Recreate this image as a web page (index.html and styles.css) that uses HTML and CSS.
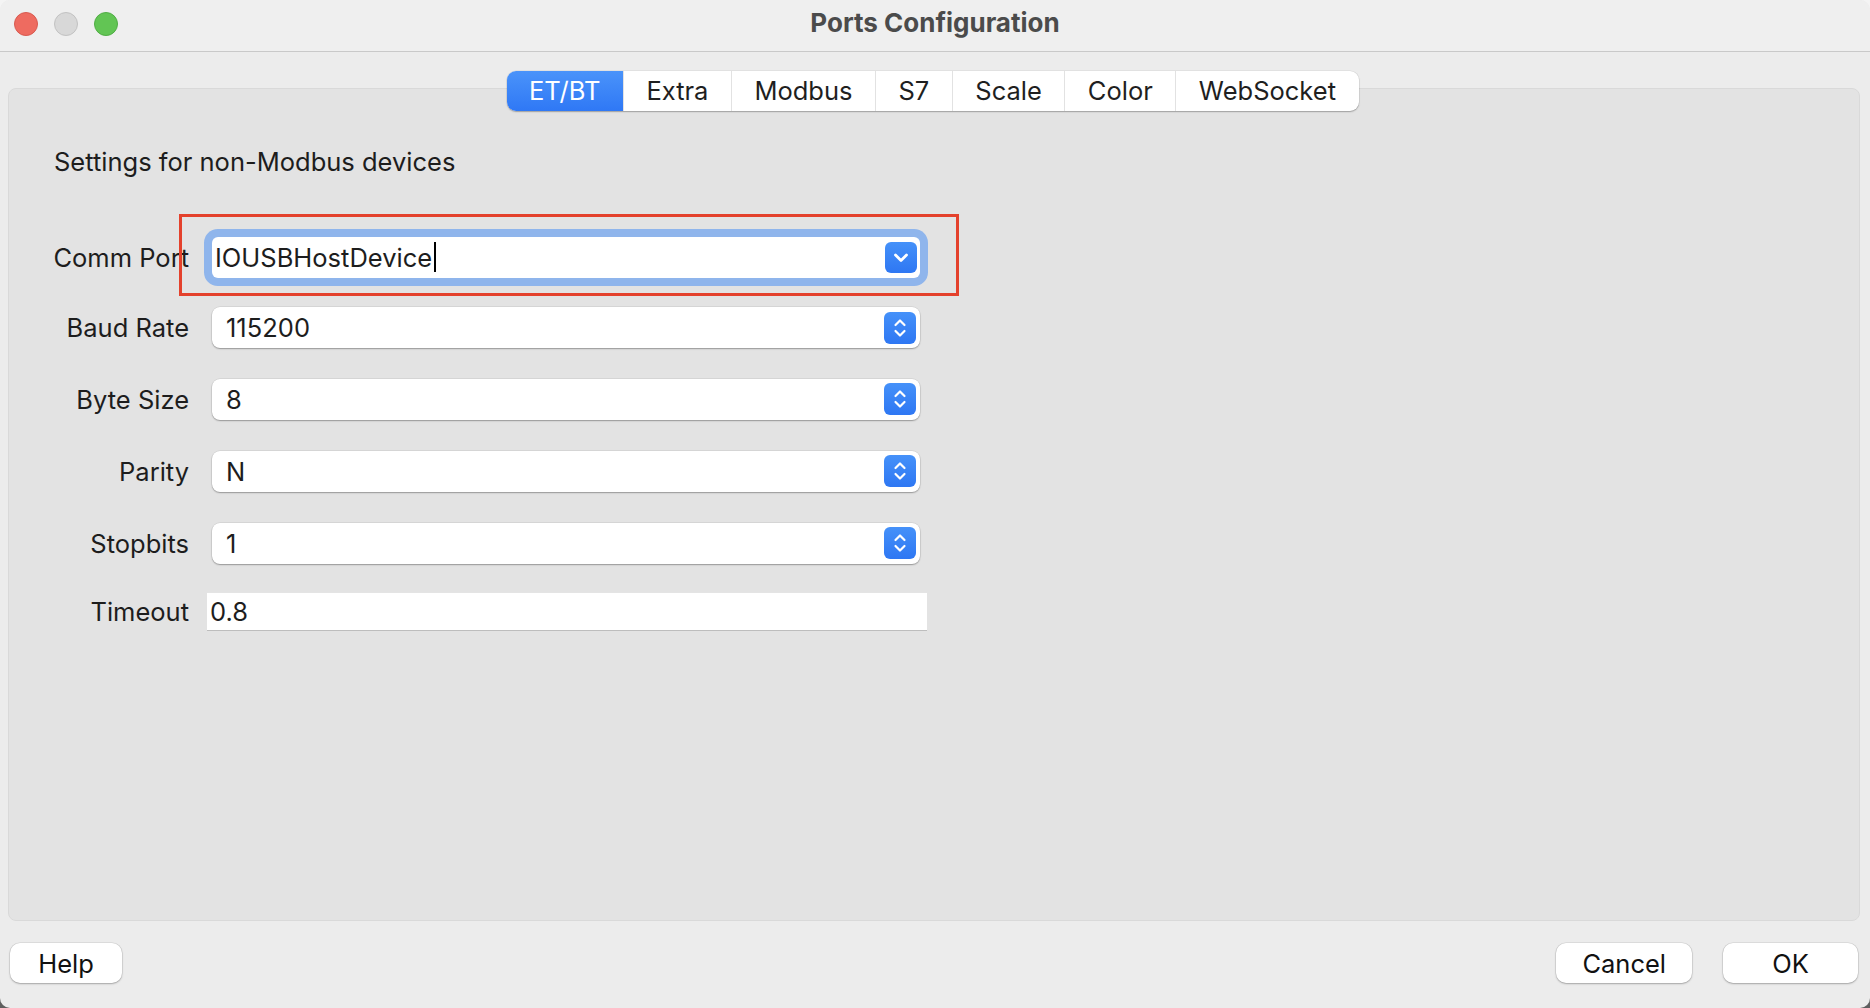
FILE: index.html
```html
<!DOCTYPE html>
<html lang="en">
<head>
  <meta charset="UTF-8">
  <title>Ports Configuration</title>
  <link rel="stylesheet" href="styles.css">
</head>
<body>
<div class="window">
  <div class="titlebar">
    <div class="lights">
      <span class="light close"></span>
      <span class="light min"></span>
      <span class="light max"></span>
    </div>
    <div class="title">Ports Configuration</div>
  </div>

  <div class="tabs">
    <div class="tab active">ET/BT</div>
    <div class="tab">Extra</div>
    <div class="tab">Modbus</div>
    <div class="tab">S7</div>
    <div class="tab">Scale</div>
    <div class="tab">Color</div>
    <div class="tab">WebSocket</div>
  </div>

  <div class="panel">
    <p class="intro">Settings for non-Modbus devices</p>

    <div class="form">
      <label class="label">Comm Port</label>
      <div class="field marked">
        <div class="combo editable">
          <span class="value">IOUSBHostDevice</span><span class="caret"></span>
          <span class="arrow">
            <svg width="32" height="31" viewBox="0 0 32 31"><path d="M10.5 13 L16 18.5 L21.5 13" fill="none" stroke="#fff" stroke-width="2.8" stroke-linecap="round" stroke-linejoin="round"/></svg>
          </span>
        </div>
      </div>

      <label class="label">Baud Rate</label>
      <div class="field">
        <div class="combo">
          <span class="value">115200</span>
          <span class="arrow">
            <svg width="32" height="32" viewBox="0 0 32 32"><path d="M11.5 13 L16 8.5 L20.5 13 M11.5 19 L16 23.5 L20.5 19" fill="none" stroke="#fff" stroke-width="2.2" stroke-linecap="round" stroke-linejoin="round"/></svg>
          </span>
        </div>
      </div>

      <label class="label">Byte Size</label>
      <div class="field">
        <div class="combo">
          <span class="value">8</span>
          <span class="arrow">
            <svg width="32" height="32" viewBox="0 0 32 32"><path d="M11.5 13 L16 8.5 L20.5 13 M11.5 19 L16 23.5 L20.5 19" fill="none" stroke="#fff" stroke-width="2.2" stroke-linecap="round" stroke-linejoin="round"/></svg>
          </span>
        </div>
      </div>

      <label class="label">Parity</label>
      <div class="field">
        <div class="combo">
          <span class="value">N</span>
          <span class="arrow">
            <svg width="32" height="32" viewBox="0 0 32 32"><path d="M11.5 13 L16 8.5 L20.5 13 M11.5 19 L16 23.5 L20.5 19" fill="none" stroke="#fff" stroke-width="2.2" stroke-linecap="round" stroke-linejoin="round"/></svg>
          </span>
        </div>
      </div>

      <label class="label">Stopbits</label>
      <div class="field">
        <div class="combo">
          <span class="value">1</span>
          <span class="arrow">
            <svg width="32" height="32" viewBox="0 0 32 32"><path d="M11.5 13 L16 8.5 L20.5 13 M11.5 19 L16 23.5 L20.5 19" fill="none" stroke="#fff" stroke-width="2.2" stroke-linecap="round" stroke-linejoin="round"/></svg>
          </span>
        </div>
      </div>

      <label class="label">Timeout</label>
      <div class="field">
        <div class="lineedit">0.8</div>
      </div>
    </div>
  </div>

  <div class="buttons">
    <button class="btn">Help</button>
    <span class="spacer"></span>
    <button class="btn dialog">Cancel</button>
    <button class="btn dialog">OK</button>
  </div>
</div>
</body>
</html>
```

FILE: styles.css
```css
body { margin: 0; background: linear-gradient(#f4f4f4 0, #f4f4f4 50%, #5e5e5e 100%); font-family: Inter, "Liberation Sans", sans-serif; color: #1d1d1d; }

.window {
  width: 1870px;
  height: 1008px;
  background: #ececec;
  border-radius: 10px;
  overflow: hidden;
  display: flex;
  flex-direction: column;
}

/* title bar */
.titlebar {
  height: 51px;
  flex: none;
  background: #efefef;
  border-bottom: 1px solid #c9c9c9;
  display: grid;
  grid-template-columns: 1fr auto 1fr;
}
.lights { display: flex; gap: 16px; padding: 12px 0 0 14px; }
.light { width: 22px; height: 22px; border-radius: 50%; border: 1px solid; }
.light.close { background: #ee6b60; border-color: #d85a50; }
.light.min { background: #d8d8d8; border-color: #c2c2c2; }
.light.max { background: #62c554; border-color: #50ad45; }
.title { font-size: 26px; font-weight: 700; color: #4b4b4b; line-height: 30px; padding-top: 8px; }

/* tabs */
.tabs {
  align-self: center;
  margin: 19px 5px -23px 0;
  position: relative;
  z-index: 1;
  display: flex;
  height: 40px;
  background: #fff;
  border-radius: 9px;
  box-shadow: 0 0 0 0.5px rgba(0,0,0,0.08), 0 1px 1.5px rgba(0,0,0,0.28);
}
.tab { padding: 0 22.5px; font-size: 25.5px; line-height: 40px; color: #1f1f1f; border-left: 1px solid #e2e2e2; }
.tab:first-child { border-left: none; }
.tab.active { background: linear-gradient(#4a93fa, #2f78f5); color: #fff; border-radius: 9px 0 0 9px; }

/* panel */
.panel {
  flex: none;
  height: 833px;
  box-sizing: border-box;
  margin: 0 10px 0 8px;
  padding-top: 59px;
  background: #e3e3e3;
  border: 1px solid #d9d9d9;
  border-radius: 8px;
}
.intro { margin: 0 0 0 45px; font-size: 25.5px; line-height: 28px; }

.form {
  margin-top: 46px;
  display: grid;
  grid-template-columns: 180px 720px;
  grid-template-rows: 70px 71px 72px 72px 72px 64px;
  column-gap: 18px;
  align-items: center;
}
.label { text-align: right; font-size: 25.5px; }
.field { position: relative; }

.combo {
  display: flex;
  align-items: center;
  height: 41px;
  margin: 0 7px 0 5px;
  padding-left: 14px;
  background: #fff;
  border-radius: 8px;
  box-shadow: 0 0 0 0.5px rgba(0,0,0,0.1), 0 1px 1.5px rgba(0,0,0,0.3);
  font-size: 25.5px;
}
.combo .arrow {
  margin-left: auto;
  margin-right: 4px;
  width: 32px;
  height: 32px;
  border-radius: 6px;
  background: linear-gradient(#4591f9, #2e77f3);
  display: flex;
}
.combo.editable { padding-left: 3px; border-radius: 6px; box-shadow: 0 0 0 8px #8fb5ec; }
.combo.editable .arrow { height: 31px; margin-right: 3px; }
.caret { width: 2px; height: 30px; background: #000; margin-left: 2px; }

/* red annotation frame round the comm port */
.marked::after {
  content: "";
  position: absolute;
  left: -28px;
  right: -32px;
  top: -23px;
  bottom: -18px;
  border: 3px solid #e4412c;
}

.lineedit {
  height: 37px;
  display: flex;
  align-items: center;
  padding-left: 3px;
  background: #fff;
  border-top: 1px solid #e4e4e4;
  box-shadow: 0 1px 0 #bdbdbd;
  font-size: 25.5px;
}

/* bottom buttons */
.buttons { display: flex; gap: 31px; padding: 22px 12px 0 10px; }
.spacer { flex: 1; }
.btn {
  height: 40px;
  min-width: 112px;
  padding: 0 26px;
  border: none;
  border-radius: 10px;
  background: #fff;
  box-shadow: 0 0 0 0.5px rgba(0,0,0,0.12), 0 1px 2px rgba(0,0,0,0.25);
  font-family: Inter, "Liberation Sans", sans-serif;
  font-size: 25.5px;
  color: #111;
}
.btn.dialog { min-width: 135px; }
```
